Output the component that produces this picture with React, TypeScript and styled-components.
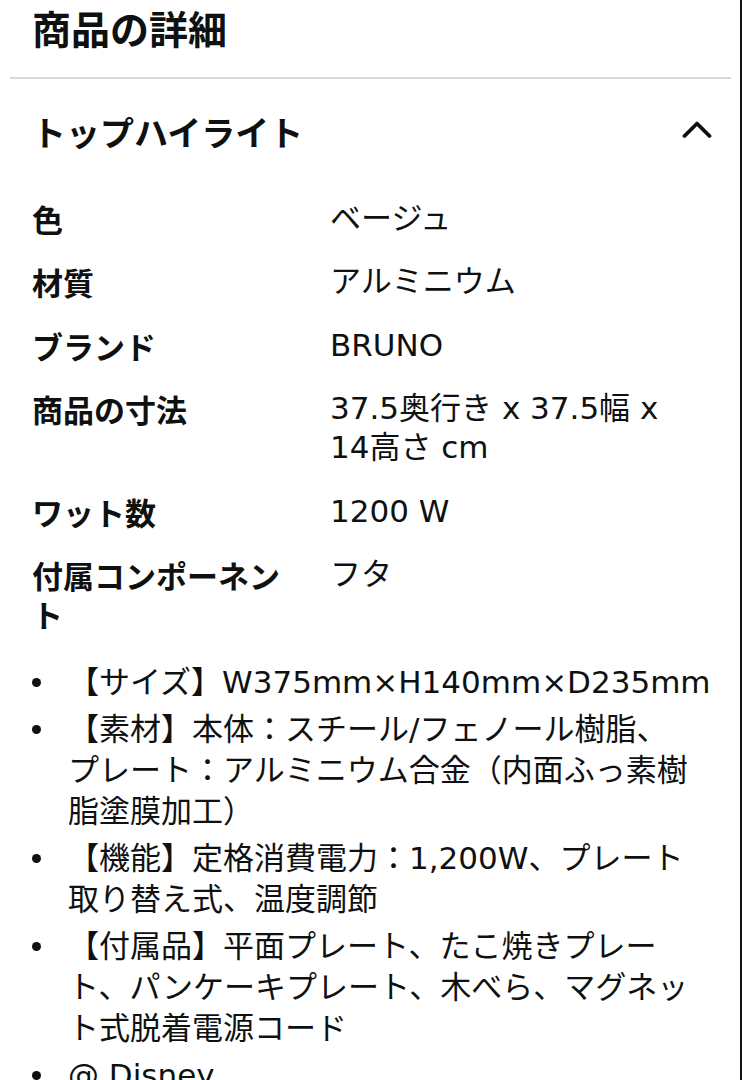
import React from "react";
import styled, { createGlobalStyle } from "styled-components";

const GlobalStyle = createGlobalStyle`
  html, body { margin: 0; padding: 0; background: #fff; }
  body {
    font-family: "DejaVu Sans", "Noto Sans CJK JP", sans-serif;
    color: #0f1111;
    -webkit-font-smoothing: antialiased;
  }
`;

const Page = styled.div`
  width: 742px;
  min-height: 1080px;
  box-sizing: border-box;
  border-right: 2px solid #111;
  overflow: hidden;
`;

const Title = styled.h1`
  margin: 0;
  padding: 0 32px;
  font-family: "Noto Sans CJK JP", sans-serif;
  font-size: 39px;
  line-height: 54px;
  font-weight: 700;
`;

const Divider = styled.hr`
  margin: 23px 9px 0 10px;
  border: 0;
  height: 2px;
  background: #d5d9d9;
`;

const Section = styled.section`
  padding: 0 24px 0 32px;
`;

const SectionHeader = styled.div`
  display: flex;
  align-items: center;
  justify-content: space-between;
  margin-top: 30px;
`;

const SectionTitle = styled.h2`
  margin: 0;
  font-family: "Noto Sans CJK JP", sans-serif;
  font-size: 34px;
  line-height: 46px;
  font-weight: 700;
`;

const Chevron = styled.svg`
  width: 30px;
  height: 20px;
  margin: 0 4px 6px 0;
`;

const SpecTable = styled.div`
  display: grid;
  grid-template-columns: 270px 1fr;
  column-gap: 28px;
  margin-top: 32px;
  font-size: 31px;
  line-height: 39px;
`;

const Label = styled.div`
  font-family: "Noto Sans CJK JP", sans-serif;
  font-weight: 700;
  padding: 12px 0 12.4px;
`;

const Value = styled.div`
  padding: 12px 0 12.4px;
  max-width: 360px;
`;

const Bullets = styled.ul`
  list-style: none;
  margin: 17px 0 0;
  padding: 0;
  font-size: 31px;
  line-height: 41px;
  display: flex;
  flex-direction: column;
  gap: 6px;
`;

const Bullet = styled.li`
  display: flex;
  align-items: flex-start;
  gap: 27px;
`;

const Dot = styled.span`
  flex: none;
  width: 9px;
  height: 9px;
  margin-top: 16px;
  border-radius: 50%;
  background: #0f1111;
`;

const BulletText = styled.span`
  flex: 1;
  min-width: 0;
`;

const specs: [string, string][] = [
  ["色", "ベージュ"],
  ["材質", "アルミニウム"],
  ["ブランド", "BRUNO"],
  ["商品の寸法", "37.5奥行き x 37.5幅 x 14高さ cm"],
  ["ワット数", "1200 W"],
  ["付属コンポーネント", "フタ"],
];

const bullets: string[][] = [
  ["【サイズ】W375mm×H140mm×D235mm"],
  ["【素材】本体：スチール/フェノール樹脂、", "プレート：アルミニウム合金（内面ふっ素樹", "脂塗膜加工）"],
  ["【機能】定格消費電力：1,200W、プレート", "取り替え式、温度調節"],
  ["【付属品】平面プレート、たこ焼きプレー", "ト、パンケーキプレート、木べら、マグネッ", "ト式脱着電源コード"],
  ["@ Disney"],
];

export default function App() {
  return (
    <>
      <GlobalStyle />
      <Page>
        <Title>商品の詳細</Title>
        <Divider />
        <Section>
          <SectionHeader>
            <SectionTitle>トップハイライト</SectionTitle>
            <Chevron viewBox="0 0 30 20" fill="none">
              <polyline
                points="2.5,17 15,4.5 27.5,17"
                stroke="#0f1111"
                strokeWidth="3.8"
                strokeLinecap="round"
                strokeLinejoin="round"
              />
            </Chevron>
          </SectionHeader>
          <SpecTable>
            {specs.map(([k, v]) => (
              <React.Fragment key={k}>
                <Label>{k}</Label>
                <Value>{v}</Value>
              </React.Fragment>
            ))}
          </SpecTable>
          <Bullets>
            {bullets.map((lines) => (
              <Bullet key={lines[0]}>
                <Dot />
                <BulletText>
                  {lines.map((l, i) => (
                    <React.Fragment key={i}>
                      {i > 0 && <br />}
                      {l}
                    </React.Fragment>
                  ))}
                </BulletText>
              </Bullet>
            ))}
          </Bullets>
        </Section>
      </Page>
    </>
  );
}
